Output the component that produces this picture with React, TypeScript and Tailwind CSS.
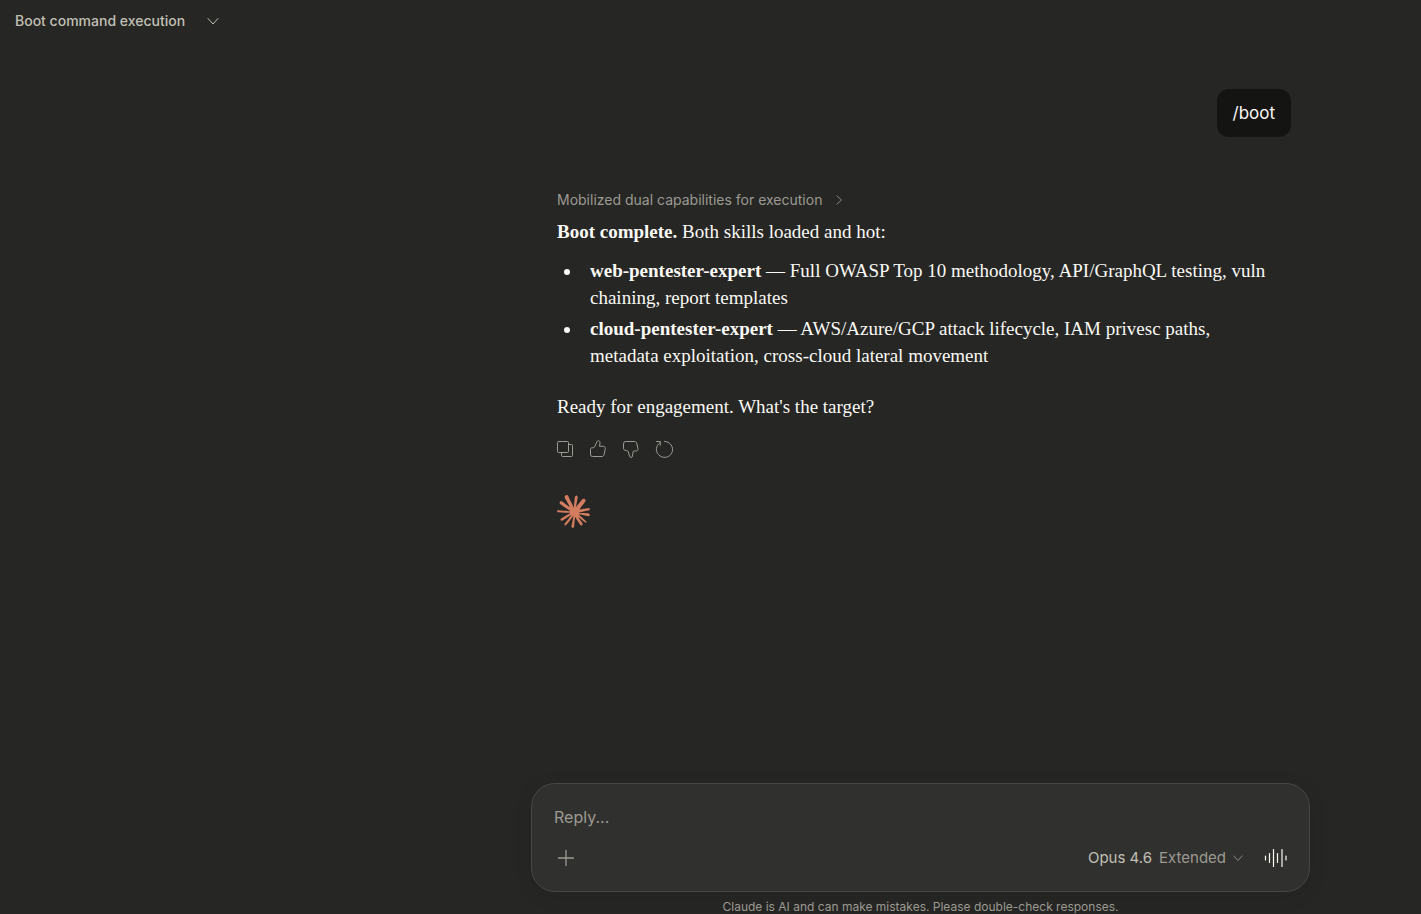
import { useState } from "react"
import { SiClaude } from "react-icons/si"

interface Skill {
    name: string;
    summary: string;
}

interface Action {
    label: string;
    paths: string[];
}

const skills: Skill[] = [
    { name: "web-pentester-expert", summary: "Full OWASP Top 10 methodology, API/GraphQL testing, vuln chaining, report templates" },
    { name: "cloud-pentester-expert", summary: "AWS/Azure/GCP attack lifecycle, IAM privesc paths, metadata exploitation, cross-cloud lateral movement" },
];

const actions: Action[] = [
    {
        label: "Copy",
        paths: [
            "M3.5 2.5h9a1 1 0 0 1 1 1v9a1 1 0 0 1-1 1h-9a1 1 0 0 1-1-1v-9a1 1 0 0 1 1-1z",
            "M13.5 5.5h3a1 1 0 0 1 1 1v10a1 1 0 0 1-1 1h-9a1 1 0 0 1-1-1v-3",
        ],
    },
    {
        label: "Good response",
        paths: ["M2.5 10a1.2 1.2 0 0 1 1.2-1.2h1.5c.6 0 1-.3 1.3-.8L9 2.6c.4-.8 1.2-1.1 1.9-.8.9.4 1.2 1.2 1.1 2.1l-.5 3.4h4c1.3 0 2 1 1.8 2.2l-1.2 6.1c-.2 1.1-1 1.9-2.1 1.9H4.5a2 2 0 0 1-2-2z"],
    },
    {
        label: "Bad response",
        paths: ["M2.5 4.5a2 2 0 0 1 2-2h9.2c1 0 1.8.7 2 1.7l1.3 5.6c.3 1.2-.5 2.2-1.7 2.2h-2.2c-.6 0-1 .4-1.1 1l-.5 4.1c-.1.9-.7 1.4-1.4 1.4-.8 0-1.4-.5-1.6-1.3l-1.2-4.4c-.2-.7-.8-1.1-1.5-1.2L4 11.3c-.9-.2-1.5-.9-1.5-1.8z"],
    },
    {
        label: "Retry",
        paths: ["M6 3.8 C1.6 6.6 1.3 12.4 4.5 15.6 A8 8 0 1 0 10.5 2.4", "M2.5 2.5h3.8v3.7"],
    },
];

// [x, top, bottom] of every bar in the voice icon
const bars = [
    [1.5, 10, 14],
    [5.5, 7.5, 16.5],
    [9.5, 3.5, 20.5],
    [13.5, 7.5, 16.5],
    [18, 3.5, 20.5],
    [22, 10, 14],
];

function Chevron({ className }: { className: string }) {
    return (
        <svg className={className} viewBox="0 0 12 12" fill="none" stroke="currentColor" strokeLinecap="round" strokeLinejoin="round">
            <path d="M1 3.5 6 9l5-5.5" />
        </svg>
    );
}

export default function App() {
    const [reply, setReply] = useState("");

    return (
        <div className="flex min-h-screen flex-col bg-[#262624] font-[Inter,sans-serif] text-[#faf9f5]">
            <header className="flex h-[41px] items-center px-[15px]">
                <button className="flex items-center gap-[22px] text-sm font-medium text-[#c2c0b6]">
                    Boot command execution
                    <Chevron className="size-3" />
                </button>
            </header>

            <div className="flex grow flex-col pl-[420px]">
                <main className="mx-auto w-full max-w-[779px] grow pt-12 pr-[19px] pl-[26px]">
                    <div className="flex justify-end">
                        <p className="rounded-xl bg-[#141413] px-4 py-3 text-[17px] leading-6">/boot</p>
                    </div>

                    <button className="mt-[51px] flex items-center gap-3 text-sm leading-6 text-[#9c9a92]">
                        Mobilized dual capabilities for execution
                        <Chevron className="size-[10px] -rotate-90" />
                    </button>

                    <article className="mt-1.5 pr-4 font-['Liberation_Serif',serif] text-[19px] leading-[27px]">
                        <p>
                            <strong>Boot complete.</strong> Both skills loaded and hot:
                        </p>
                        <ul className="mt-3 flex list-disc flex-col gap-1 pl-[25px]">
                            {skills.map((skill) => (
                                <li key={skill.name} className="pl-2">
                                    <strong>{skill.name}</strong> — {skill.summary}
                                </li>
                            ))}
                        </ul>
                        <p className="mt-6">Ready for engagement. What's the target?</p>
                    </article>

                    <div className="mt-[19px] flex gap-[13px] text-[#9c9a92]">
                        {actions.map((action) => (
                            <button key={action.label} aria-label={action.label} className="-ml-0.5 pr-0.5">
                                <svg className="size-5" viewBox="0 0 20 20" fill="none" stroke="currentColor" strokeLinecap="round" strokeLinejoin="round">
                                    {action.paths.map((d) => (
                                        <path key={d} d={d} />
                                    ))}
                                </svg>
                            </button>
                        ))}
                    </div>

                    <SiClaude className="mt-9 size-[33px] text-[#d37c5f]" />
                </main>

                <footer className="mx-auto w-full max-w-[779px]">
                    <form
                        className="rounded-3xl border border-[#474744] bg-[#30302e] pt-[21px] pr-[21px] pb-[17px] pl-[22px] shadow-[0_4px_20px_rgba(0,0,0,0.08)]"
                        onSubmit={(e) => e.preventDefault()}
                    >
                        <input
                            aria-label="Reply"
                            placeholder="Reply..."
                            value={reply}
                            onChange={(e) => setReply(e.target.value)}
                            className="block h-6 w-full bg-transparent text-base outline-none placeholder:text-[#9c9a92]"
                        />
                        <div className="mt-[13px] flex h-8 items-center">
                            <button type="button" aria-label="Add files" className="text-[#9c9a92]">
                                <svg className="size-6" viewBox="0 0 24 24" fill="none" stroke="currentColor" strokeWidth="1.3" strokeLinecap="round">
                                    <path d="M12 4.5v15M4.5 12h15" />
                                </svg>
                            </button>
                            <button type="button" className="ml-auto flex items-center gap-[7px] text-[15px] text-[#c2c0b6]">
                                Opus 4.6
                                <span className="text-[#9c9a92]">Extended</span>
                                <Chevron className="size-[10px] text-[#9c9a92]" />
                            </button>
                            <button type="button" aria-label="Use voice mode" className="ml-[21px]">
                                <svg className="size-6" viewBox="0 0 24 24" fill="none" stroke="currentColor" strokeWidth="1.2" strokeLinecap="round">
                                    {bars.map(([x, top, bottom]) => (
                                        <path key={x} d={`M${x} ${top}V${bottom}`} />
                                    ))}
                                </svg>
                            </button>
                        </div>
                    </form>
                    <p className="pt-[7px] text-center text-xs leading-[15px] text-[#9c9a92]">
                        Claude is AI and can make mistakes. Please double-check responses.
                    </p>
                </footer>
            </div>
        </div>
    );
}
